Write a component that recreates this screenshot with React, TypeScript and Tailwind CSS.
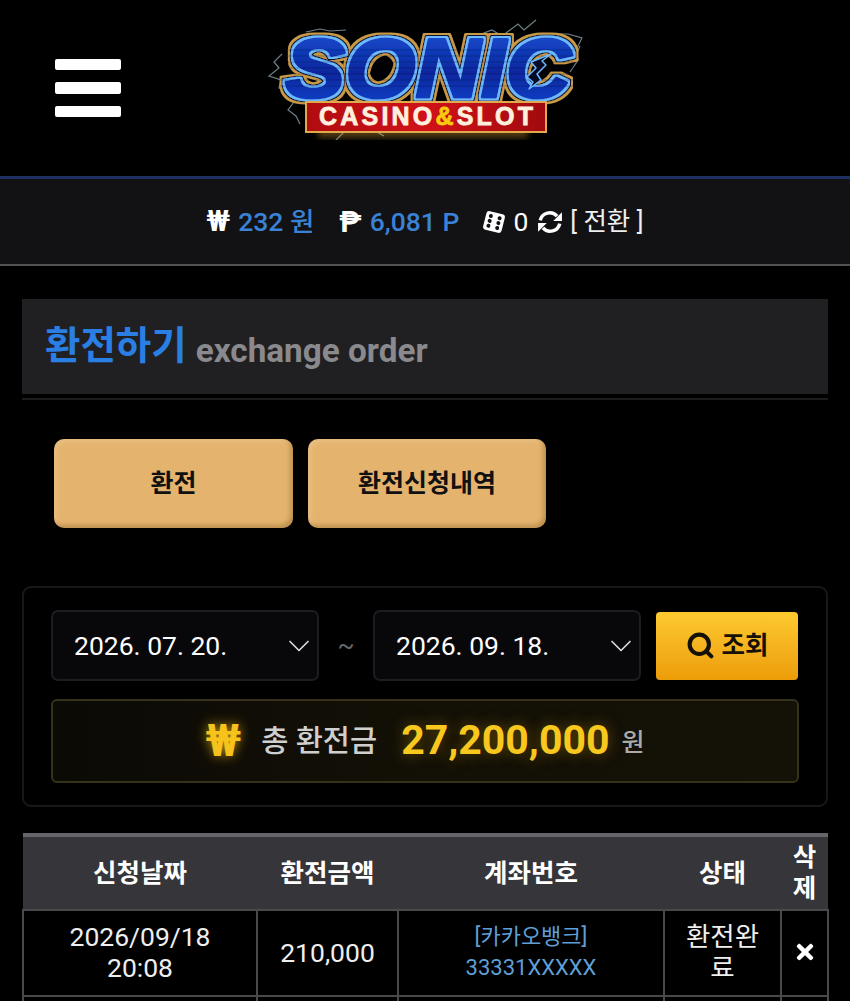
import React from 'react';
import { ChevronDown, Search } from 'lucide-react';
import { FaTimes } from 'react-icons/fa';

const FONT = 'font-[Roboto,"Noto_Sans_CJK_KR",sans-serif]';

function SonicLogo() {
  const fam = '"Liberation Sans", sans-serif';
  return (
    <svg width="340" height="130" viewBox="0 0 340 130" className="block">
      <defs>
        <linearGradient id="blueFill" x1="0" y1="0" x2="0" y2="1">
          <stop offset="0" stopColor="#1c57dc" />
          <stop offset="0.55" stopColor="#08279e" />
          <stop offset="1" stopColor="#0e48d4" />
        </linearGradient>
        <linearGradient id="redFill" x1="0" y1="0" x2="1" y2="0">
          <stop offset="0" stopColor="#b00c10" />
          <stop offset="0.5" stopColor="#d01218" />
          <stop offset="1" stopColor="#a00a0e" />
        </linearGradient>
        <filter id="soft" x="-10%" y="-10%" width="120%" height="120%">
          <feGaussianBlur stdDeviation="0.5" />
        </filter>
        <filter id="glow" x="-10%" y="-30%" width="120%" height="160%">
          <feGaussianBlur stdDeviation="3" />
        </filter>
        {/* gold, navy and light blue rims grown out of one word */}
        <filter id="rims" x="-5%" y="-15%" width="110%" height="130%">
          <feMorphology in="SourceAlpha" operator="dilate" radius="4.5" result="d1" />
          <feFlood floodColor="#c99a45" />
          <feComposite in2="d1" operator="in" result="gold" />
          <feMorphology in="SourceAlpha" operator="dilate" radius="3.2" result="d2" />
          <feFlood floodColor="#0a1238" />
          <feComposite in2="d2" operator="in" result="navy" />
          <feMorphology in="SourceAlpha" operator="dilate" radius="2" result="d3" />
          <feFlood floodColor="#6db8ff" />
          <feComposite in2="d3" operator="in" result="light" />
          <feMerge>
            <feMergeNode in="gold" />
            <feMergeNode in="navy" />
            <feMergeNode in="light" />
            <feMergeNode in="SourceGraphic" />
          </feMerge>
        </filter>
      </defs>
      {/* lightning */}
      <g fill="none" stroke="#b7d6e6" strokeWidth="1.2" opacity="0.6" filter="url(#soft)">
        <path d="M24 44l-8 8 5 6-10 8 12 4-2 8 8 4" />
        <path d="M48 22l14-3 10 2 16-1" />
        <path d="M218 26l16-6 10 6 16-12 6 6 12-10" />
        <path d="M290 24l20 0 14 4-6 12 2 10-8 12" />
        <path d="M36 92l-6 8 8 6 4 8" />
        <path d="M78 130l8-8 14 0 12-4 14 8" />
        <path d="M322 36l-6 14" />
      </g>
      <text x="170" y="87" fontFamily={fam} fontWeight="700" fontStyle="italic" fontSize="84" textAnchor="middle" textLength="286" lengthAdjust="spacingAndGlyphs" fill="url(#blueFill)" stroke="url(#blueFill)" strokeWidth="3" strokeLinejoin="round" filter="url(#rims)">SONIC</text>
      {/* scan lines over the letters */}
      <g stroke="#000a40" strokeWidth="1" opacity="0.3">
        <path d="M22 40H316M22 46H316M22 52H316M22 58H316M22 64H316M22 70H316M22 76H316" />
      </g>
      {/* notch in the C */}
      <path d="M293 44l-20 8 5 6-9 9 6 5-4 7 12-9-4-6 9-9-4-4z" fill="#050a26" stroke="#6db8ff" strokeWidth="1.5" strokeLinejoin="round" />
      {/* banner */}
      <rect x="60" y="94" width="210" height="34" fill="#e8a83a" opacity="0.35" filter="url(#glow)" />
      <rect x="48" y="92" width="240" height="30" fill="url(#redFill)" stroke="#e0a94c" strokeWidth="2" />
      <text x="168" y="115" fontFamily={fam} fontWeight="700" fontSize="25" textAnchor="middle" textLength="214" lengthAdjust="spacing" fill="#fff0de" stroke="#fff0de" strokeWidth="0.8">
        CASINO<tspan fill="#f8c90f" stroke="#f8c90f">&amp;</tspan>SLOT
      </text>
    </svg>
  );
}

function DiceIcon() {
  return (
    <svg width="28" height="28" viewBox="0 0 28 28" className="block">
      <g transform="rotate(14 14 14)">
        <rect x="4.5" y="4.5" width="19" height="19" rx="3" fill="#fff" />
        <g fill="#111">
          <circle cx="9.5" cy="9" r="2" />
          <circle cx="9.5" cy="14" r="2" />
          <circle cx="9.5" cy="19" r="2" />
          <circle cx="18.5" cy="9" r="2" />
          <circle cx="18.5" cy="14" r="2" />
          <circle cx="18.5" cy="19" r="2" />
        </g>
      </g>
    </svg>
  );
}

function SyncIcon() {
  return (
    <svg width="26" height="26" viewBox="0 0 24 24" fill="none" className="block">
      <path d="M3 10.5A9 9 0 0 1 18.5 6.5" stroke="#fff" strokeWidth="3.2" />
      <path d="M21 13.5A9 9 0 0 1 5.5 17.5" stroke="#fff" strokeWidth="3.2" />
      <path d="M23 3v8h-8z" fill="#fff" />
      <path d="M1 21v-8h8z" fill="#fff" />
    </svg>
  );
}

function DateSelect({ value }: { value: string }) {
  return (
    <div className="w-[268px] h-[71px] flex items-center justify-between pl-[21px] rounded-[7px] border-2 border-[#1c1c21] bg-[#08080b] text-[26.5px] text-white">
      <span>{value}</span>
      <ChevronDown size={36} strokeWidth={1.1} className="text-[#dddddd]" />
    </div>
  );
}

const thClass = 'bg-[#363539] text-white font-bold text-[25.5px] leading-[31px] text-center align-middle break-all';
const tdClass = 'border-2 border-[#4a4a4d] text-center align-middle leading-[31px] p-0 pb-[2px]';

export default function App() {
  return (
    <div className={`${FONT} w-[850px] h-[1001px] overflow-hidden bg-black`}>
      <header className="h-[176px] flex items-center pl-[55px] bg-black">
        <div className="flex flex-col gap-[12px]">
          <div className="w-[66px] h-[11px] rounded-[2px] bg-white" />
          <div className="w-[66px] h-[12px] rounded-[2px] bg-white" />
          <div className="w-[66px] h-[11px] rounded-[2px] bg-white" />
        </div>
        <div className="ml-[137px] -mt-[26px]">
          <SonicLogo />
        </div>
      </header>

      <div className="h-[90px] flex items-center justify-center border-t-[3px] border-b-2 border-t-[#1d2f63] border-b-[#525254] bg-[#121214] text-[26.5px]">
        <span className="font-bold text-white text-[29px] leading-none">₩</span>
        <span className="ml-[8px] font-medium text-[#3a82d6]">232 원</span>
        <span className="ml-[25px] font-bold text-white text-[30px] leading-none">₱</span>
        <span className="ml-[8px] font-medium text-[#3a82d6]">6,081 P</span>
        <span className="ml-[21px]"><DiceIcon /></span>
        <span className="ml-[5px] text-white">0</span>
        <span className="ml-[9px]"><SyncIcon /></span>
        <span className="ml-[7px] text-[#eeeeee] text-[25.5px]">[ 전환 ]</span>
      </div>

      <main className="px-[22px] pt-[33px]">
        <div className="h-[101px] border-b-[2px] border-[#1c1c1f]">
          <div className="h-[95px] bg-[#202023] pl-[23px] flex items-center">
            <h1 className="mt-[-2px] text-[38.5px] font-bold text-[#2a7fe4]">환전하기</h1>
            <span className="ml-[9px] mt-[8px] text-[33.3px] font-bold text-[#8a8a8e]">exchange order</span>
          </div>
        </div>

        <div className="flex gap-[15px] pl-[32px] pt-[39px]">
          <button className="w-[239px] h-[89px] rounded-[10px] bg-[#e4b46f] text-[25px] font-bold text-[#111111] shadow-[inset_-3px_-3px_4px_rgba(120,80,20,0.35),inset_3px_3px_4px_rgba(255,235,200,0.2)]">환전</button>
          <button className="w-[238px] h-[89px] rounded-[10px] bg-[#e4b46f] text-[25px] font-bold text-[#111111] shadow-[inset_-3px_-3px_4px_rgba(120,80,20,0.35),inset_3px_3px_4px_rgba(255,235,200,0.2)]">환전신청내역</button>
        </div>

        <section className="mt-[58px] h-[221px] rounded-[9px] border-2 border-[#18181c] pl-[27px] pr-[27px] pt-[22px]">
          <div className="flex items-center">
            <DateSelect value="2026. 07. 20." />
            <span className="w-[54px] text-center text-[25px] text-[#66666a]">~</span>
            <DateSelect value="2026. 09. 18." />
            <button className="ml-[15px] w-[142px] h-[68px] rounded-[4px] bg-gradient-to-b from-[#fdca2f] to-[#ec9d07] flex items-center justify-center gap-[7px] text-[25.5px] font-bold text-[#161106]">
              <Search size={29} strokeWidth={3.4} />
              조회
            </button>
          </div>
          <div className="mt-[18px] h-[84px] rounded-[6px] border-2 border-[#36321a] bg-gradient-to-r from-[#0b0a05] via-[#131006] to-[#141107] flex items-center justify-center">
            <span className="text-[44px] leading-none font-bold text-[#f6c21c] [text-shadow:0_0_12px_#b98c10]">₩</span>
            <span className="ml-[20px] text-[29.5px] font-medium text-[#cfcfcf]">총 환전금</span>
            <span className="ml-[24px] text-[41px] font-bold text-[#f8c81e] [text-shadow:0_0_14px_#6b520a]">27,200,000</span>
            <span className="ml-[12px] mt-[4px] text-[25px] font-medium text-[#aaaaa6]">원</span>
          </div>
        </section>

        <table className="mt-[26px] w-[805px] table-fixed border-collapse border-t-4 border-[#66666a]">
          <colgroup>
            <col className="w-[234px]" />
            <col className="w-[141px]" />
            <col className="w-[266px]" />
            <col className="w-[117px]" />
            <col className="w-[47px]" />
          </colgroup>
          <thead>
            <tr className="h-[75px]">
              <th className={thClass}>신청날짜</th>
              <th className={thClass}>환전금액</th>
              <th className={thClass}>계좌번호</th>
              <th className={thClass}>상태</th>
              <th className={`${thClass} px-[6px]`}>삭제</th>
            </tr>
          </thead>
          <tbody>
            <tr className="h-[86px]">
              <td className={`${tdClass} text-[26.5px] text-[#eeeeee]`}>2026/09/18<br />20:08</td>
              <td className={`${tdClass} text-[26.5px] text-[#eeeeee]`}>210,000</td>
              <td className={`${tdClass} text-[22px] text-[#5f9fd6]`}>[카카오뱅크]<br />33331XXXXX</td>
              <td className={`${tdClass} text-[26.5px] text-[#eeeeee] px-[12px] break-all`}>환전완료</td>
              <td className={tdClass}><FaTimes size={24} className="mx-auto text-white" /></td>
            </tr>
            <tr className="h-[87px]">
              <td className={tdClass} />
              <td className={tdClass} />
              <td className={tdClass} />
              <td className={tdClass} />
              <td className={tdClass} />
            </tr>
          </tbody>
        </table>
      </main>
    </div>
  );
}
